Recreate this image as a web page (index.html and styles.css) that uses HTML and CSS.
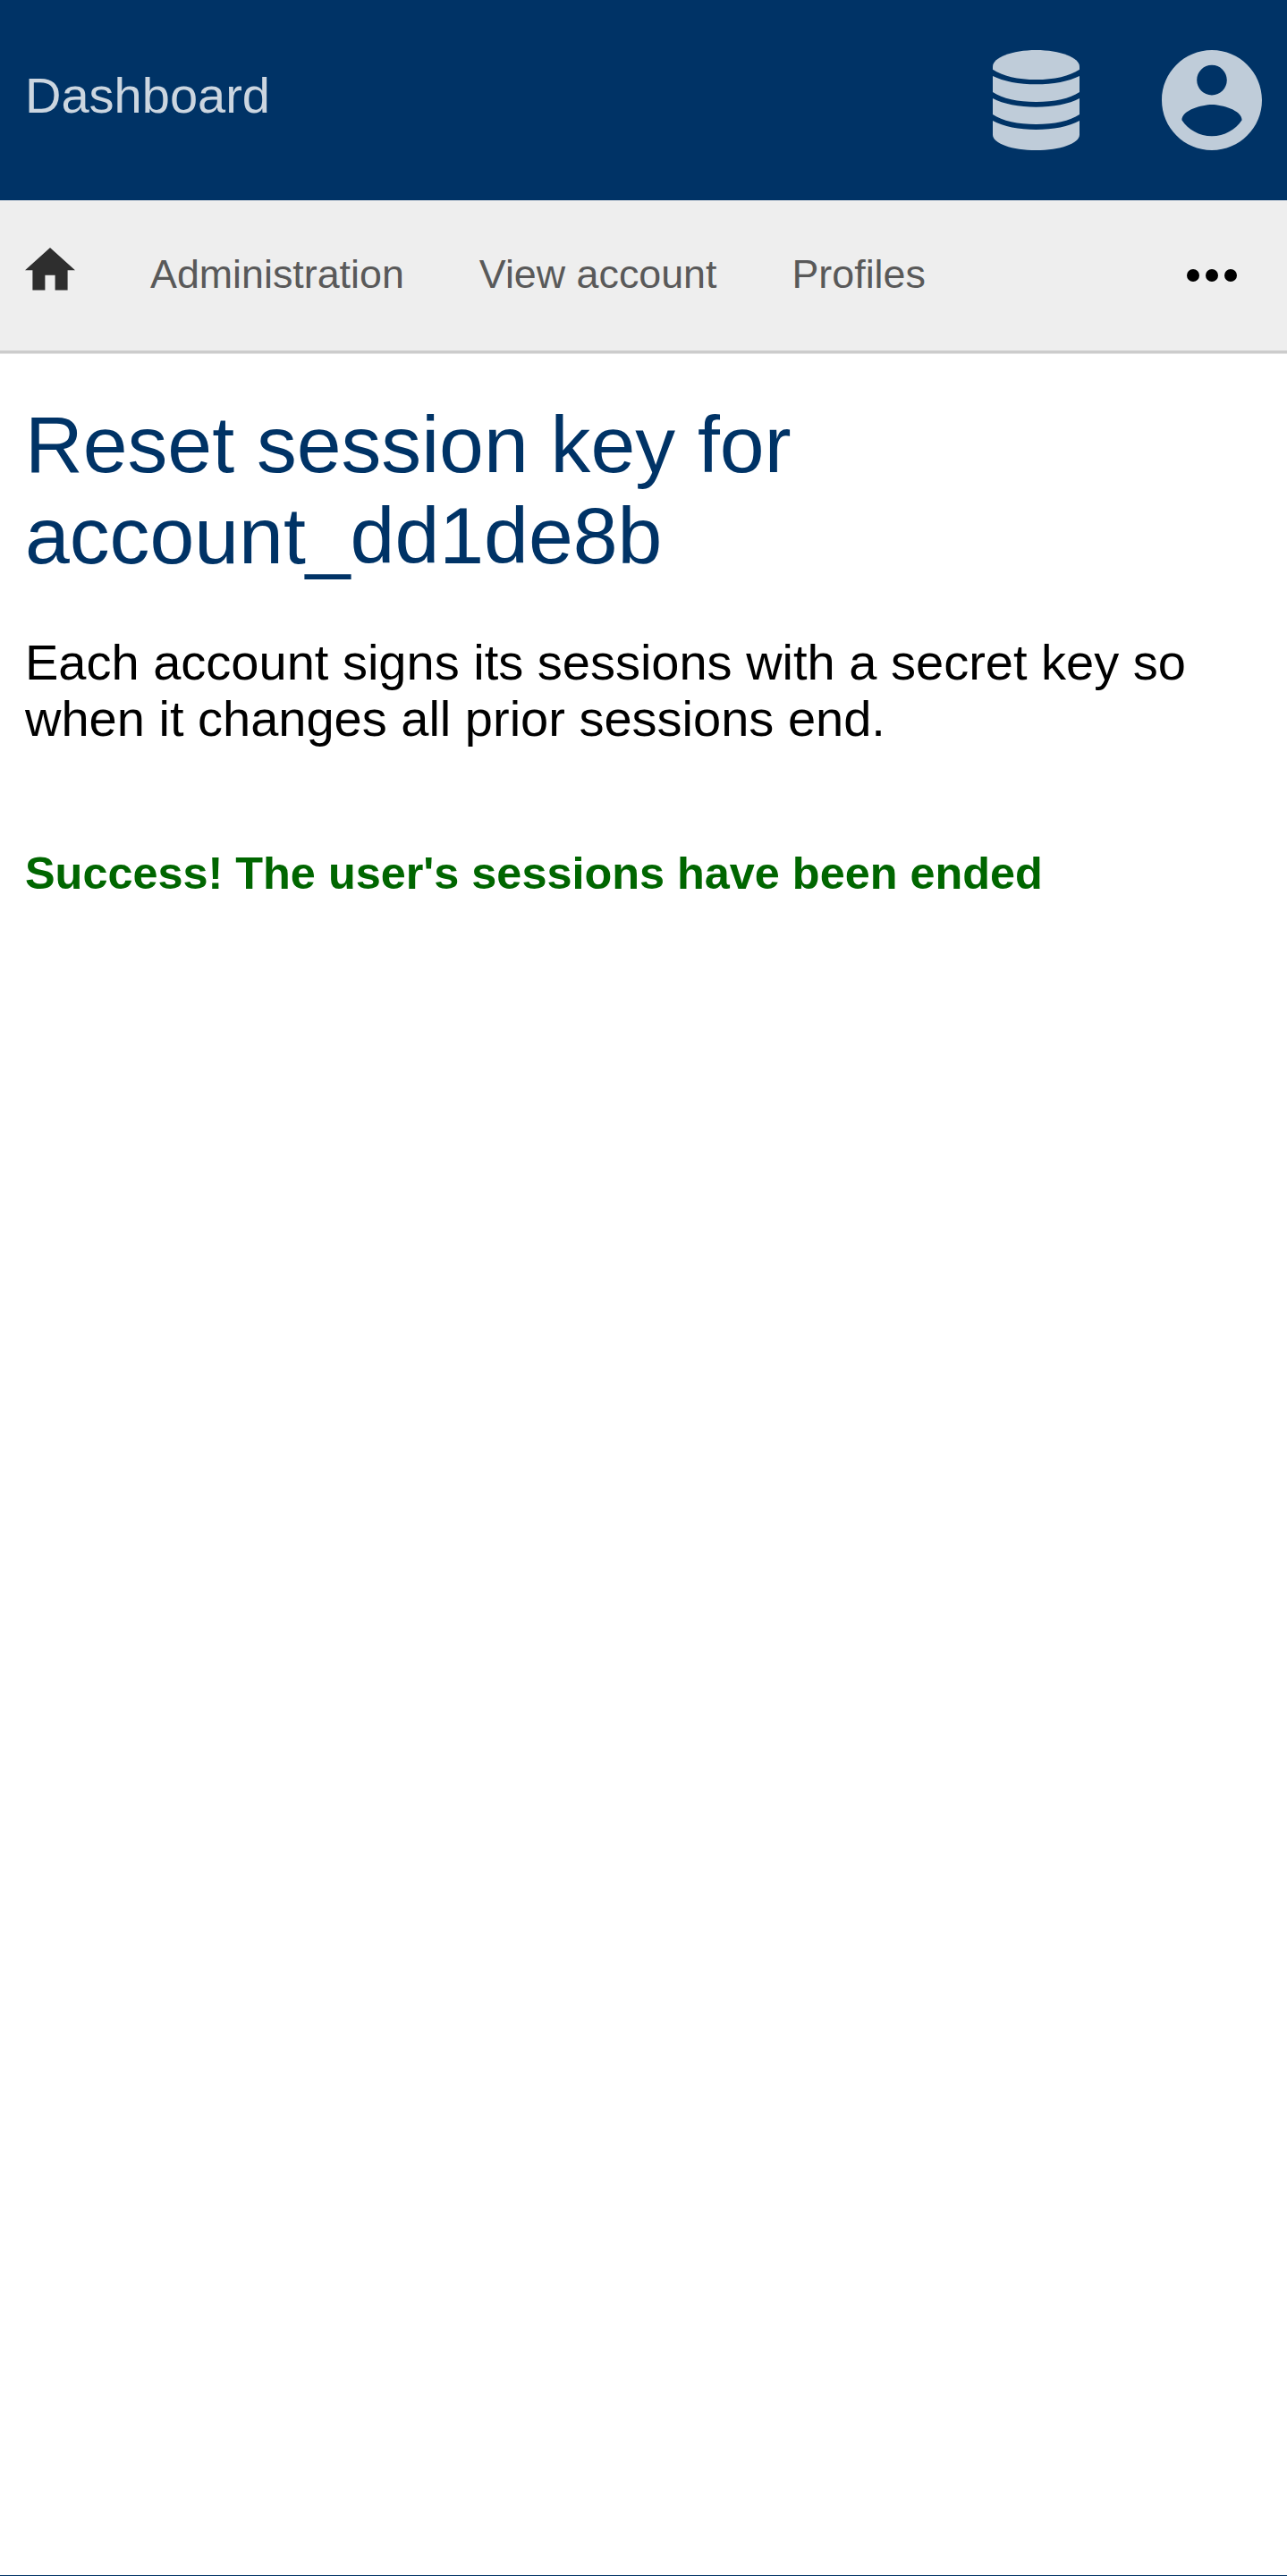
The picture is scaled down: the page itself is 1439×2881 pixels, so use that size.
FILE: index.html
```html
<!DOCTYPE html>
<html lang="en">
<head>
<meta charset="utf-8">
<title>Reset session key</title>
<link rel="stylesheet" href="styles.css">
</head>
<body>
<header class="header">
  <a class="header-title">Dashboard</a>
  <div class="header-icons">
    <svg class="icon-database" viewBox="0 0 290 336" preserveAspectRatio="none" aria-hidden="true">
      <path d="M0 55C0 25 65 0 145 0S290 25 290 55V65C258 87 205 99 145 99S32 87 0 65Z"/>
      <path d="M0 87C35 105 88 115 145 115S255 105 290 87V141C258 163 205 174 145 174S32 163 0 141Z"/>
      <path d="M0 162C35 181 88 191 145 191S255 181 290 162V216C258 238 205 249 145 249S32 238 0 216Z"/>
      <path d="M0 237C35 257 88 267 145 267S255 257 290 237V284C290 313 225 336 145 336S0 313 0 284Z"/>
    </svg>
    <svg class="icon-account" viewBox="2 2 20 20" aria-hidden="true">
      <path d="M12 2C6.48 2 2 6.48 2 12s4.48 10 10 10 10-4.48 10-10S17.52 2 12 2zm0 3c1.66 0 3 1.34 3 3s-1.34 3-3 3-3-1.34-3-3 1.34-3 3-3zm0 14.2c-2.5 0-4.71-1.28-6-3.22.03-1.99 4-3.08 6-3.08 1.99 0 5.97 1.09 6 3.08-1.29 1.94-3.5 3.22-6 3.22z"/>
    </svg>
  </div>
</header>
<nav class="nav">
  <svg class="icon-home" viewBox="2 3 20 17" aria-hidden="true"><path d="M10 20v-6h4v6h5v-8h3L12 3 2 12h3v8z"/></svg>
  <a class="nav-link">Administration</a>
  <a class="nav-link">View account</a>
  <a class="nav-link">Profiles</a>
  <svg class="icon-more" viewBox="4 10 16 4" aria-hidden="true"><circle cx="6" cy="12" r="2"/><circle cx="12" cy="12" r="2"/><circle cx="18" cy="12" r="2"/></svg>
</nav>
<main class="content">
  <h1 class="title">Reset session key for account_dd1de8b</h1>
  <p class="description">Each account signs its sessions with a secret key so when it changes all prior sessions end.</p>
  <p class="success">Success! The user's sessions have been ended</p>
</main>
<footer class="footer"></footer>
</body>
</html>
```
FILE: styles.css
```css
* {
  box-sizing: border-box;
}

body {
  margin: 0;
  min-height: 2881px;
  display: flex;
  flex-direction: column;
  background: #fff;
  color: #000;
  font-family: "Liberation Sans", Arial, sans-serif;
  font-size: 56px;
  line-height: 63px;
}

.header {
  height: 224px;
  padding: 0 28.5px 0 28px;
  display: flex;
  justify-content: space-between;
  align-items: flex-start;
  background: #003366;
}

.header-title {
  margin-top: 75px;
  color: #ccd6e0;
}

.header-icons {
  display: flex;
  gap: 91.5px;
  margin-top: 56px;
  fill: #bfccd9;
}

.icon-database {
  width: 97px;
  height: 112px;
}

.icon-account {
  width: 112px;
  height: 112px;
}

.nav {
  height: 171px;
  margin-bottom: 1px;
  padding: 0 56.5px 0 28px;
  display: flex;
  align-items: flex-start;
  gap: 84px;
  background: #eee;
  border-bottom: 3px solid #ccc;
  box-shadow: 0 1px #e5e5e5;
  font-size: 44.8px;
  line-height: 52px;
}

.nav-link {
  margin-top: 56.25px;
  color: #595959;
}

.icon-home {
  width: 56px;
  height: 47.6px;
  margin-top: 53px;
  fill: #2e2e2e;
}

.icon-more {
  width: 56px;
  height: 14px;
  margin: 77px 0 0 auto;
}

.content {
  flex: 1;
  padding: 51px 28px 0;
}

.title {
  margin: 0;
  color: #003366;
  font-size: 89.6px;
  font-weight: 400;
  line-height: 101.5px;
}

.description {
  margin: 59px 0 0;
}

.success {
  margin: 113px 0 0;
  color: #006600;
  font-size: 50.4px;
  font-weight: 700;
  line-height: 57px;
}

.footer {
  height: 1px;
  background: #003366;
}
```
